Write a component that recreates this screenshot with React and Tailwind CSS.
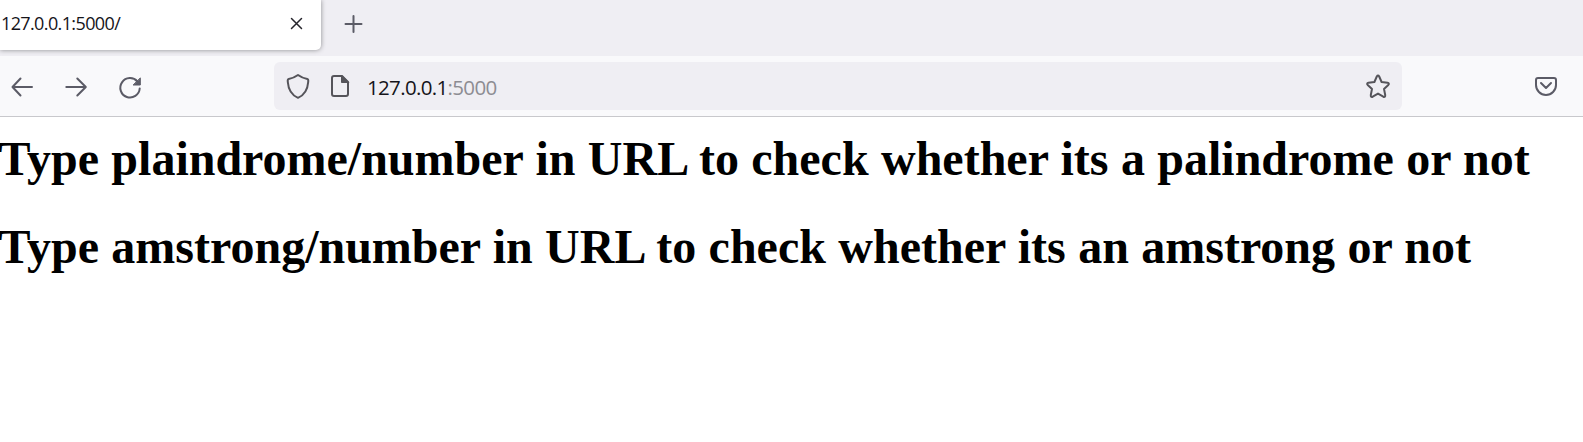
import React from "react";

function Icon({ className = "", size = 32, children }) {
  return (
    <svg
      className={`shrink-0 ${className}`}
      width={size}
      height={size}
      viewBox={`0 0 ${size} ${size}`}
      fill="none"
      stroke="currentColor"
      strokeWidth="2"
      strokeLinecap="round"
      strokeLinejoin="round"
      aria-hidden="true"
    >
      {children}
    </svg>
  );
}

function TabBar() {
  return (
    <div className="flex h-14 bg-[#efeef3]">
      <div className="flex h-[50px] w-[321px] items-center justify-between rounded-br-[5px] bg-white pl-px pr-[12px] shadow-[0_0_5px_rgba(0,0,0,0.42)]">
        <span className="pb-[4px] font-['Open_Sans','Noto_Sans',sans-serif] text-[18px] leading-6 tracking-[-0.62px] text-[#15141a]">
          127.0.0.1:5000/
        </span>
        <Icon className="mb-[3px] text-[#26252c]" size={24}>
          <path d="M6.500 6.500L16.500 16.500M16.500 6.500L6.500 16.500" strokeWidth="1.500" />
        </Icon>
      </div>
      <Icon className="ml-[16px] mt-[8px] text-[#5b5b66]">
        <path d="M16.500 8V24M8.500 16H24.500" />
      </Icon>
    </div>
  );
}

function AddressBar() {
  return (
    <div className="flex h-12 w-[1128px] items-center rounded-md bg-[#efeef3] text-[#55545a]">
      <Icon className="ml-[8px]">
        <path d="M16 5C19 7.200 22 8.300 25.300 9C26.500 9.300 26.400 10.500 26.200 12C25.600 20 22 25.300 16 27.800C10 25.300 6.400 20 5.800 12C5.600 10.500 5.500 9.300 6.700 9C10 8.300 13 7.200 16 5Z" />
      </Icon>
      <Icon className="ml-[10px]">
        <path d="M10 6H18L24 12V24Q24 26 22 26H10Q8 26 8 24V8Q8 6 10 6Z" />
        <path d="M17.500 5.500V12.500H24.500Z" fill="currentColor" strokeWidth="1" />
      </Icon>
      <span className="ml-[11px] grow pt-[1px] font-['Open_Sans','Noto_Sans',sans-serif] text-[20.5px] leading-7 tracking-[-0.66px] text-[#15141a]">
        127.0.0.1<span className="text-[#8d8c92]">:5000</span>
      </span>
      <Icon className="mr-[8px]">
        <path d="M14.800 6.500Q16 4.500 17.200 6.500L19.600 12L25.500 12.700Q27.700 13.200 26.300 14.900L22 18.900L23.200 25Q23.400 27.500 21.300 26.700L16 23.600L10.700 26.700Q8.600 27.500 8.800 25L10 18.900L5.700 14.900Q4.300 13.200 6.500 12.700L12.400 12Z" />
      </Icon>
    </div>
  );
}

function Toolbar() {
  return (
    <div className="flex h-[61px] items-start border-b border-[#c8c8cc] bg-[#f9f9fb] pt-[6px] text-[#5b5b66]">
      <div className="flex h-12 w-[274px] items-center gap-[22px] pl-[6px]">
        <Icon>
          <path d="M14.500 8.500L6.500 17L14.500 25.500M7 17H26" />
        </Icon>
        <Icon>
          <path d="M17.300 8.500L25.800 17L17.300 25.500M25.300 17H6.300" />
        </Icon>
        <Icon>
          <path d="M23.400 11.500A9.700 9.700 0 1 0 25.700 18.500" />
          <path d="M26.300 8.300V15H19.500Z" fill="currentColor" strokeWidth="1" />
        </Icon>
      </div>
      <AddressBar />
      <div className="ml-[128px] flex h-12 items-center">
        <Icon>
          <path d="M8 8H24Q26 8 26 10V15A10 10 0 0 1 6 15V10Q6 8 8 8ZM11 13L16 18L21 13" />
        </Icon>
      </div>
    </div>
  );
}

export default function App() {
  return (
    <div className="h-[442px] w-[1583px] overflow-hidden bg-white">
      <TabBar />
      <Toolbar />
      <main className="-ml-[1.5px] flex flex-col gap-8 whitespace-nowrap pt-[14px] font-['Liberation_Serif','Times_New_Roman',serif] text-[48px] font-bold leading-[56px] text-black [word-spacing:0.4px]">
        <h1>Type plaindrome/number in URL to check whether its a palindrome or not</h1>
        <h1>Type amstrong/number in URL to check whether its an amstrong or not</h1>
      </main>
    </div>
  );
}
